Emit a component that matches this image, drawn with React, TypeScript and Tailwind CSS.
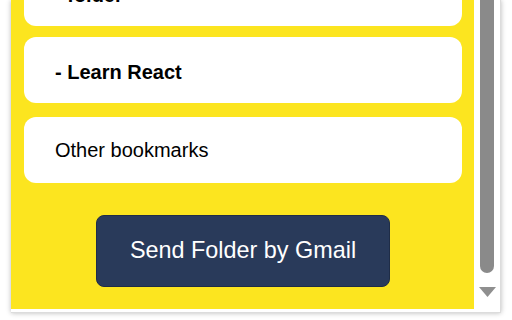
import React from "react";

export default function App() {
  return (
    <div className="w-[512px] h-[320px] bg-white overflow-hidden" style={{ fontFamily: '"Liberation Sans", Arial, sans-serif' }}>
      <div className="ml-[11px] w-[490px] h-[313px] bg-white flex flex-col shadow-[0_0_5px_rgba(0,0,0,0.28)] border-r border-b border-[#dcdcdc] overflow-hidden">
        <div className="flex h-[309px] overflow-hidden">
          <div className="w-[464px] h-full bg-[#fce51f] flex flex-col pl-[13px] pr-[12px] overflow-hidden">
            <div className="shrink-0 -mt-[40px] h-[66px] bg-white rounded-[12px] flex items-center pl-[31px] pt-[4px] text-[20px] font-bold text-black">
              - folder
            </div>
            <div className="shrink-0 mt-[11px] h-[66px] bg-white rounded-[12px] flex items-center pl-[31px] pt-[3px] text-[20px] font-bold text-black">
              - Learn React
            </div>
            <div className="shrink-0 mt-[14px] h-[66px] bg-white rounded-[12px] flex items-center pl-[31px] text-[20px] text-black">
              Other bookmarks
            </div>
            <div className="flex justify-center mt-[32px]">
              <button className="w-[294px] h-[72px] bg-[#293a5a] rounded-[8px] text-white text-[23.4px] flex items-center justify-center border border-[#1f2d47]">
                Send Folder by Gmail
              </button>
            </div>
          </div>
          <div className="w-[26px] h-full bg-white flex flex-col items-start pl-[6px]">
            <div className="w-[14px] h-[273px] bg-[#8a8a8a] rounded-b-[7px]" />
            <svg className="mt-[14px] -ml-[1px]" width="17" height="10" viewBox="0 0 17 10">
              <polygon points="0,0 17,0 8.5,10" fill="#8f8f8f" />
            </svg>
          </div>
        </div>
      </div>
    </div>
  );
}
